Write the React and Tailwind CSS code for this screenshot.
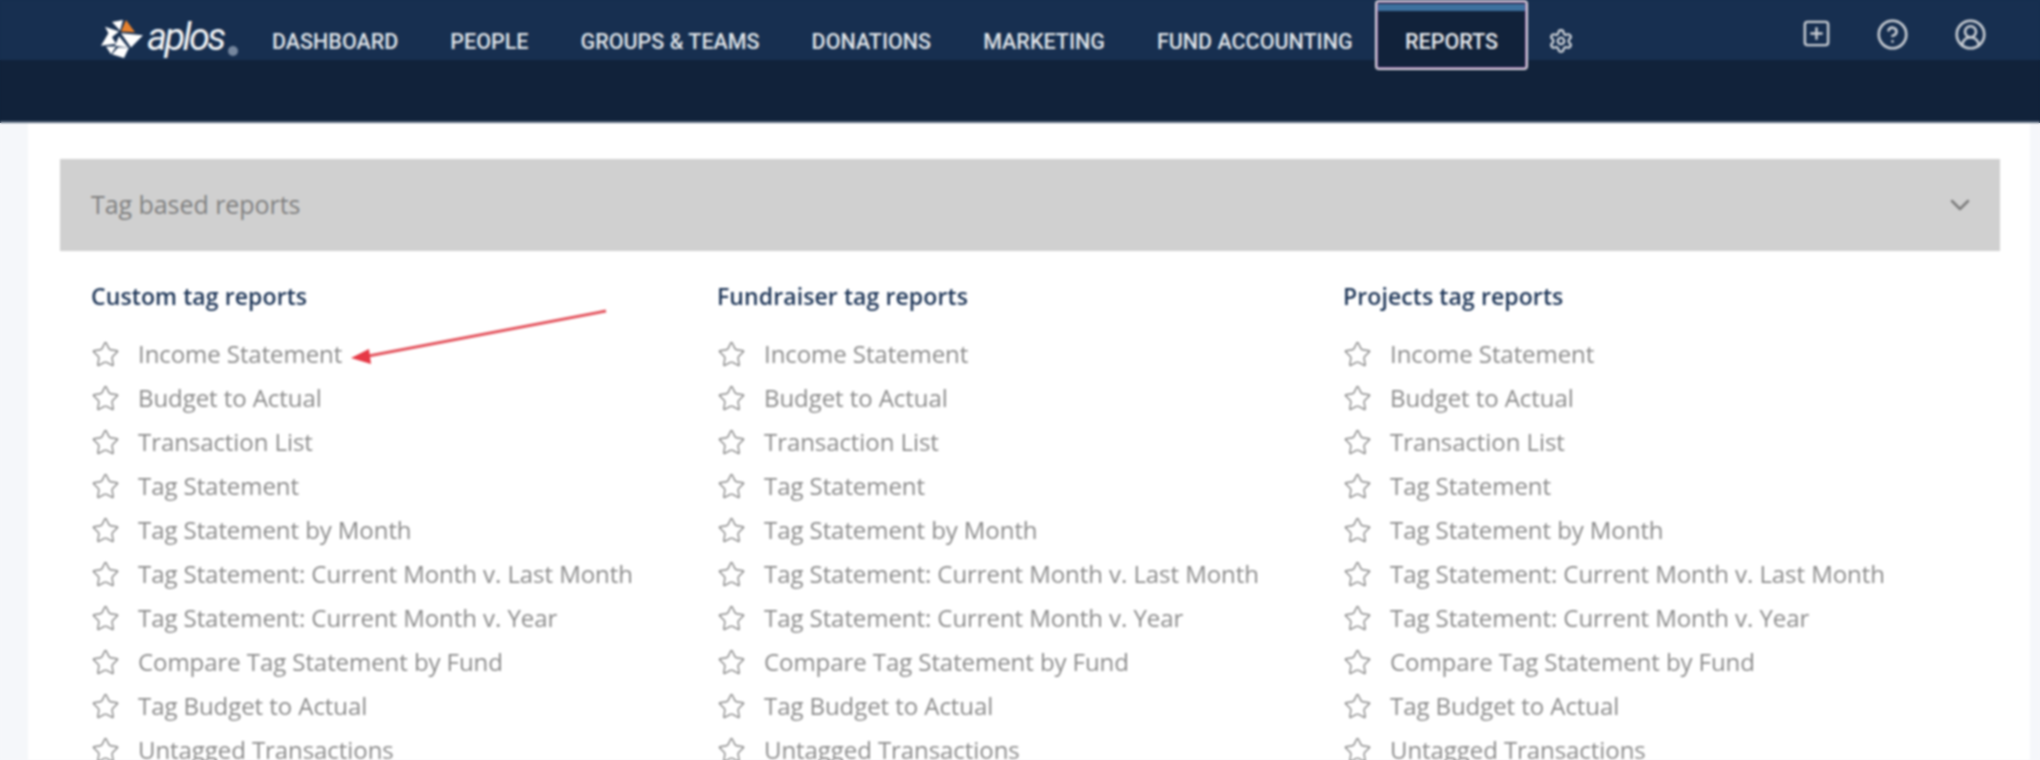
import React from 'react';
import { ChevronDown, CircleHelp, CircleUserRound, Settings, SquarePlus, Star } from 'lucide-react';

const NAV_ITEMS = ['DASHBOARD', 'PEOPLE', 'GROUPS & TEAMS', 'DONATIONS', 'MARKETING', 'FUND ACCOUNTING'];

const REPORTS = [
    'Income Statement',
    'Budget to Actual',
    'Transaction List',
    'Tag Statement',
    'Tag Statement by Month',
    'Tag Statement: Current Month v. Last Month',
    'Tag Statement: Current Month v. Year',
    'Compare Tag Statement by Fund',
    'Tag Budget to Actual',
    'Untagged Transactions',
];

const COLUMNS = ['Custom tag reports', 'Fundraiser tag reports', 'Projects tag reports'];

const Logo = () => (
    <div className="flex items-start w-[138px] h-[60px] pt-[20px] pl-[1px]">
        <svg width="42" height="38" viewBox="0 0 42 40" preserveAspectRatio="none" className="shrink-0">
            <polygon points="11,2 22,0 19,11" fill="#ffffff" />
            <polygon points="25,0 34,13 20,12" fill="#e8822e" />
            <polygon points="4,7 18,12 10,19" fill="#ffffff" />
            <polygon points="0,27 8,13 15,25" fill="#ffffff" />
            <polygon points="20,14 42,16 30,29" fill="#ffffff" />
            <polygon points="18,17 27,29 14,27" fill="#ffffff" />
            <polygon points="5,28 15,28 10,36" fill="#ffffff" />
            <polygon points="17,29 28,29 23,40 11,36" fill="#ffffff" />
        </svg>
        <span className="ml-[4px] mt-[-6px] font-['Roboto',sans-serif] italic text-[38px] leading-[46px] tracking-[-2.6px] text-[#f2f4f6]">aplos</span>
        <span className="ml-[4px] mt-[26px] w-[10px] h-[10px] shrink-0 rounded-full bg-[#76879e]"></span>
    </div>
);

const ReportColumn = ({ title }) => (
    <div className="w-[626px] shrink-0">
        <h3 className="h-[24px] leading-[24px] text-[23px] font-semibold text-[#1d3557] tracking-[0.1px] whitespace-nowrap">{title}</h3>
        <ul className="mt-[24px]">
            {REPORTS.map(report => (
                <li key={report} className="flex items-center h-[44px]">
                    <Star size={29} strokeWidth={1.2} className="text-[#8a8a8a] shrink-0" />
                    <span className="ml-[18px] text-[24px] text-[#8b8b8b] tracking-[-0.07px] whitespace-nowrap">{report}</span>
                </li>
            ))}
        </ul>
    </div>
);

const App = () => {
    return (
        <div className="w-[2040px] h-[760px] overflow-hidden bg-[linear-gradient(#172f50_60px,#11223a_60px,#11223a_123px,#f5f7fa_123px)]">
            <div className="relative h-full bg-[#f5f7fa] font-['Open_Sans',sans-serif] blur-[0.8px]">
                <header className="h-[123px] bg-[#11223a] border-b-2 border-b-[#5d6d80]">
                    <div className="flex items-start h-[60px] bg-[#172f50] pl-[100px]">
                        <Logo />
                        <nav className="flex items-center ml-[34px] font-['Roboto',sans-serif] font-medium text-[21.5px] text-[#dfe3e8] h-[84px]">
                            {NAV_ITEMS.map(item => (
                                <span key={item} className="mr-[52px] whitespace-nowrap">{item}</span>
                            ))}
                        </nav>
                    </div>
                </header>

                {/* active tab hangs over both header bars */}
                <div className="absolute left-[1375px] top-0 w-[153px] h-[70px] rounded-[4px] border-2 border-[#d8d2dc] shadow-[inset_0_0_0_1px_#8a5f9e] bg-[#11223a] flex items-center justify-center font-['Roboto',sans-serif] font-medium text-[21.5px] text-[#e6e9ed]">
                    <span className="absolute left-[1px] right-[1px] top-[2px] h-[7px] bg-[#3e719f]"></span>
                    <span className="mt-[14px]">REPORTS</span>
                </div>
                <Settings size={26} strokeWidth={2} className="absolute left-[1548px] top-[28px] text-[#d5d9de]" />
                <SquarePlus size={31} strokeWidth={1.9} className="absolute left-[1801px] top-[18px] text-[#c9ced4]" />
                <CircleHelp size={33} strokeWidth={1.9} className="absolute left-[1876px] top-[18px] text-[#c9ced4]" />
                <CircleUserRound size={33} strokeWidth={1.9} className="absolute left-[1954px] top-[18px] text-[#c9ced4]" />

                <main className="ml-[28px] mr-[10px] h-[637px] bg-white pl-[32px] pr-[30px] pt-[36px]">
                    <div className="flex items-center justify-between h-[92px] bg-[#d0d0d0] pl-[31px] pr-[24px]">
                        <span className="text-[25px] text-[#808080] tracking-[-0.05px]">Tag based reports</span>
                        <ChevronDown size={32} strokeWidth={1.9} className="text-[#7d7d7d]" />
                    </div>
                    <div className="flex pl-[31px] pt-[33px]">
                        {COLUMNS.map(title => <ReportColumn key={title} title={title} />)}
                    </div>
                </main>

                {/* red annotation arrow */}
                <svg className="absolute left-[343px] top-[300px]" width="270" height="70" viewBox="0 0 270 70">
                    <line x1="263" y1="11" x2="20" y2="57" stroke="#e4555f" strokeWidth="3" />
                    <polygon points="8,58 26,49 28,64" fill="#e63946" />
                </svg>
            </div>
        </div>
    );
};

export default App;
